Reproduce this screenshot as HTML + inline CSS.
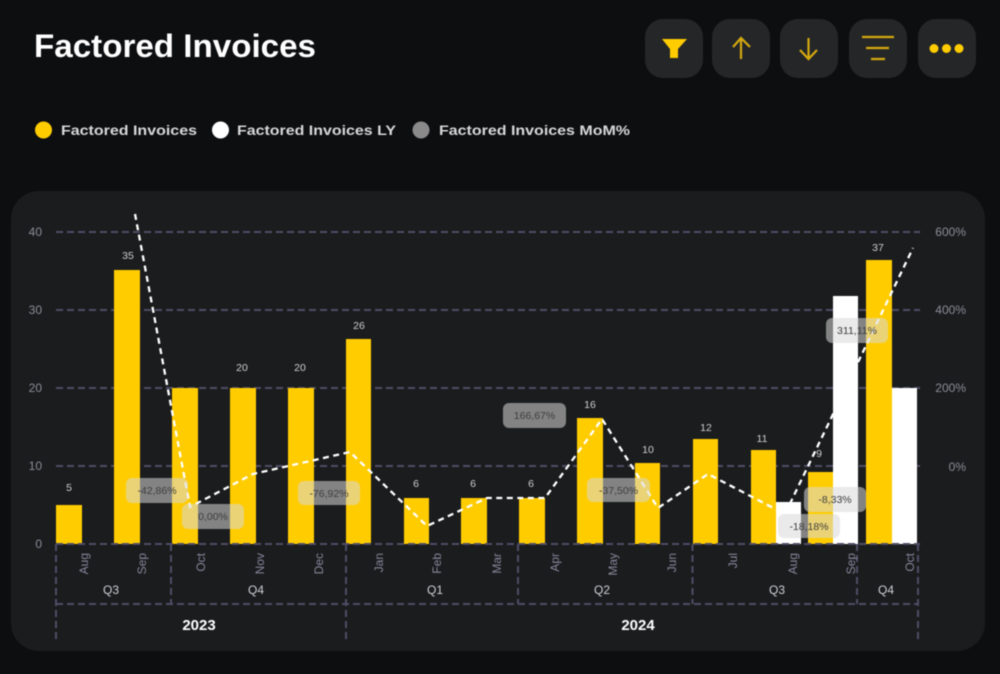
<!DOCTYPE html>
<html><head><meta charset="utf-8"><title>Factored Invoices</title>
<style>
html,body{margin:0;padding:0;background:#0d0e10;width:1000px;height:674px;overflow:hidden}
svg{display:block;filter:blur(.6px)}
text{font-family:"Liberation Sans",sans-serif}
.ax{fill:#8b8d99;font-size:12px}
.mo{fill:#85869a;font-size:12px;text-anchor:end}
.q{fill:#d0d0d4;font-size:12px;text-anchor:middle}
.yr{fill:#fff;font-size:15px;font-weight:bold;text-anchor:middle}
.v{fill:#cfcfd2;font-size:10.5px;text-anchor:middle}
.p{fill:#d9d9d9;fill-opacity:.55}
.pt{fill:#3d3d3d;font-size:10.5px;text-anchor:middle}
.g{stroke:#4f4c66;stroke-width:2;stroke-dasharray:7 4;fill:none}
.y{fill:#ffcc00}.w{fill:#fff}
.ic{stroke:#d4a90f;stroke-width:2.2;fill:none}
</style></head>
<body>
<svg width="1000" height="674" viewBox="0 0 1000 674" xmlns="http://www.w3.org/2000/svg">
<rect width="1000" height="674" fill="#0d0e10"/>
<text x="34" y="57" font-size="32" font-weight="bold" fill="#fff" textLength="282" lengthAdjust="spacingAndGlyphs">Factored Invoices</text>

<g fill="#252628">
<rect x="645" y="19" width="58" height="59" rx="18"/>
<rect x="712" y="19" width="58" height="59" rx="18"/>
<rect x="780" y="19" width="58" height="59" rx="18"/>
<rect x="849" y="19" width="58" height="59" rx="18"/>
<rect x="918" y="19" width="58" height="59" rx="18"/>
</g>
<path d="M662 39H687L678 49V58H670V49Z" fill="#ffcc00"/>
<path class="ic" d="M741 59V38M733 47L741 38L750 47"/>
<path class="ic" d="M808.5 38V59M800 50L808.5 59L817 50"/>
<path class="ic" d="M862 37H894M866 48H889M871 59H885"/>
<g fill="#ffcc00"><circle cx="934" cy="48.5" r="4.5"/><circle cx="946.5" cy="48.5" r="4.5"/><circle cx="959" cy="48.5" r="4.5"/></g>

<circle cx="43.5" cy="130" r="8.5" fill="#ffcc00"/>
<text x="61" y="135" font-size="14" font-weight="bold" fill="#d8d8d8" textLength="136" lengthAdjust="spacingAndGlyphs">Factored Invoices</text>
<circle cx="220.5" cy="130" r="8.5" fill="#fff"/>
<text x="237" y="135" font-size="14" font-weight="bold" fill="#d8d8d8" textLength="159" lengthAdjust="spacingAndGlyphs">Factored Invoices LY</text>
<circle cx="421" cy="130" r="8.5" fill="#8a8a8a"/>
<text x="439" y="135" font-size="14" font-weight="bold" fill="#d8d8d8" textLength="191" lengthAdjust="spacingAndGlyphs">Factored Invoices MoM%</text>

<rect x="11" y="191" width="974" height="460" rx="28" fill="#1b1c1e"/>

<path class="g" d="M56 232H920M56 310H920M56 388H920M56 466H920"/>

<g class="ax" text-anchor="end">
<text x="42" y="236">40</text><text x="42" y="314">30</text><text x="42" y="392">20</text><text x="42" y="470">10</text><text x="42" y="548">0</text>
<text x="966" y="236">600%</text><text x="966" y="314">400%</text><text x="966" y="392">200%</text><text x="966" y="471">0%</text>
</g>

<g class="y">
<rect x="56" y="505" width="26" height="39"/>
<rect x="114" y="270" width="26" height="274"/>
<rect x="172" y="388" width="26" height="156"/>
<rect x="230" y="388" width="26" height="156"/>
<rect x="288" y="388" width="26" height="156"/>
<rect x="346" y="339" width="25" height="205"/>
<rect x="404" y="498" width="25" height="46"/>
<rect x="461" y="498" width="26" height="46"/>
<rect x="519" y="498" width="26" height="46"/>
<rect x="577" y="418" width="26" height="126"/>
<rect x="635" y="463" width="25" height="81"/>
<rect x="693" y="439" width="25" height="105"/>
<rect x="751" y="450" width="25" height="94"/>
<rect x="808" y="472" width="25" height="72"/>
<rect x="866" y="260" width="26" height="284"/>
</g>
<g class="w">
<rect x="776" y="502" width="25" height="42"/>
<rect x="833" y="296" width="25" height="248"/>
<rect x="892" y="388" width="25" height="156"/>
</g>

<path class="g" d="M56 544H920M56 604H918M56 544V640M171 544V604M346 544V640M518 544V604M692.5 544V604M857 544V604M918 544V640"/>

<path d="M135 214L190 507L253 474L350 452L427 526L487 498L545 498L602 419L658 508L708 474L785 514L913 248" fill="none" stroke="#fff" stroke-width="2.3" stroke-dasharray="6 4.5"/>

<g class="mo">
<text transform="translate(88,553) rotate(-90)">Aug</text>
<text transform="translate(146,553) rotate(-90)">Sep</text>
<text transform="translate(205,553) rotate(-90)">Oct</text>
<text transform="translate(264,553) rotate(-90)">Nov</text>
<text transform="translate(323,553) rotate(-90)">Dec</text>
<text transform="translate(383,553) rotate(-90)">Jan</text>
<text transform="translate(441,553) rotate(-90)">Feb</text>
<text transform="translate(501,553) rotate(-90)">Mar</text>
<text transform="translate(559,553) rotate(-90)">Apr</text>
<text transform="translate(617,553) rotate(-90)">May</text>
<text transform="translate(676,553) rotate(-90)">Jun</text>
<text transform="translate(737,553) rotate(-90)">Jul</text>
<text transform="translate(797,553) rotate(-90)">Aug</text>
<text transform="translate(855,553) rotate(-90)">Sep</text>
<text transform="translate(914,553) rotate(-90)">Oct</text>
</g>

<g class="q">
<text x="111" y="594">Q3</text><text x="256" y="594">Q4</text><text x="435" y="594">Q1</text><text x="602" y="594">Q2</text><text x="777" y="594">Q3</text><text x="886" y="594">Q4</text>
</g>
<text class="yr" x="199" y="630">2023</text>
<text class="yr" x="638" y="630">2024</text>

<g class="v">
<text x="69" y="491">5</text><text x="128" y="259">35</text><text x="242" y="371">20</text><text x="300" y="371">20</text><text x="359" y="329">26</text>
<text x="416" y="487">6</text><text x="473" y="487">6</text><text x="531" y="487">6</text><text x="590" y="408">16</text><text x="648" y="453">10</text>
<text x="706" y="431">12</text><text x="762" y="442">11</text><text x="819" y="457">9</text><text x="878" y="251">37</text>
</g>

<g class="p">
<rect x="126" y="478" width="62" height="25" rx="6"/>
<rect x="182" y="504" width="62" height="25" rx="6"/>
<rect x="298" y="481" width="62" height="24" rx="6"/>
<rect x="503" y="403" width="63" height="25" rx="6"/>
<rect x="587" y="478" width="63" height="24" rx="6"/>
<rect x="826" y="318" width="62" height="25" rx="6"/>
<rect x="778" y="514" width="62" height="24" rx="6"/>
<rect x="804" y="487" width="62" height="25" rx="6"/>
</g>
<g class="pt">
<text x="157" y="494">-42,86%</text>
<text x="213" y="520">0,00%</text>
<text x="329" y="497">-76,92%</text>
<text x="534.5" y="419">166,67%</text>
<text x="618.5" y="494">-37,50%</text>
<text x="857" y="334">311,11%</text>
<text x="809" y="530">-18,18%</text>
<text x="835" y="503">-8,33%</text>
</g>
</svg>
</body></html>
